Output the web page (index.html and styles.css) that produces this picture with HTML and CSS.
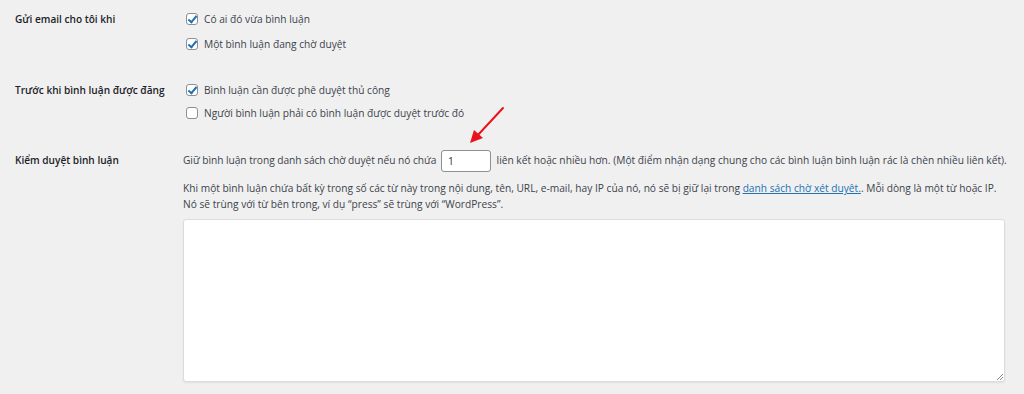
FILE: index.html
```html
<!DOCTYPE html>
<html lang="vi">
<head>
<meta charset="utf-8">
<link rel="stylesheet" href="styles.css">
</head>
<body>
<div class="page">
  <div class="row row-email">
    <div class="label">Gửi email cho tôi khi</div>
    <div class="field">
      <label class="check"><span class="box checked"></span>Có ai đó vừa bình luận</label>
      <label class="check second"><span class="box checked"></span>Một bình luận đang chờ duyệt</label>
    </div>
  </div>
  <div class="row row-before">
    <div class="label">Trước khi bình luận được đăng</div>
    <div class="field">
      <label class="check"><span class="box checked"></span>Bình luận cần được phê duyệt thủ công</label>
      <label class="check second tight"><span class="box"></span>Người bình luận phải có bình luận được duyệt trước đó</label>
    </div>
  </div>
  <div class="row row-mod">
    <div class="label label-mod">Kiểm duyệt bình luận</div>
    <div class="field">
      <div class="inline">Giữ bình luận trong danh sách chờ duyệt nếu nó chứa <span class="num">1</span> <span class="rest">liên kết hoặc nhiều hơn. (Một điểm nhận dạng chung cho các bình luận bình luận rác là chèn nhiều liên kết).</span></div>
      <p class="desc">Khi một bình luận chứa bất kỳ trong số các từ này trong nội dung, tên, URL, e-mail, hay IP của nó, nó sẽ bị giữ lại trong <a href="#">danh sách chờ xét duyệt.</a>. Mỗi dòng là một từ hoặc IP.<br>Nó sẽ trùng với từ bên trong, ví dụ “press” sẽ trùng với “WordPress”.</p>
      <div class="textarea"><span class="grip"></span></div>
    </div>
  </div>
  <svg class="arrow" width="40" height="40" viewBox="0 0 40 40">
    <line x1="36" y1="2" x2="10" y2="30" stroke="#e8141a" stroke-width="2" stroke-linecap="round"/>
    <polygon points="3,37 7,24 16,32" fill="#e8141a"/>
  </svg>
</div>
</body>
</html>
```
FILE: styles.css
```css
* { box-sizing: border-box; }
html, body { margin: 0; padding: 0; }
body {
  background: #f0f0f1;
  font-family: "Open Sans", "Noto Sans", sans-serif;
  font-size: 10.2px;
  color: #3c434a;
  width: 1024px;
  height: 394px;
  overflow: hidden;
}
.page {
  position: relative;
  padding: 11px 0 0 15px;
}
.row {
  display: grid;
  grid-template-columns: 168px 1fr;
}
.row-before { margin-top: 30px; }
.row-mod { margin-top: 28px; }
.label {
  color: #1d2327;
  font-weight: 600;
  font-size: 10.1px;
  line-height: 16px;
}
.label-mod { padding-top: 3px; }
.field { line-height: 16px; }
.check {
  display: flex;
  align-items: center;
  gap: 6px;
  padding-left: 3px;
}
.check.second { margin-top: 9px; }
.check.tight { margin-top: 7px; }
.box {
  width: 12px;
  height: 12px;
  border: 1px solid #8c8f94;
  border-radius: 3px;
  background: #fff;
  position: relative;
  flex: none;
}
.box.checked::after {
  content: "";
  position: absolute;
  left: 3px;
  top: 0px;
  width: 3px;
  height: 7px;
  border-right: 2px solid #2271b1;
  border-bottom: 2px solid #2271b1;
  transform: rotate(40deg);
}
.inline {
  white-space: nowrap;
  line-height: 22px;
  letter-spacing: -0.04px;
}
.rest { letter-spacing: 0.01px; }
.num {
  display: inline-block;
  vertical-align: middle;
  width: 50px;
  height: 22px;
  line-height: 20px;
  border: 1px solid #8c8f94;
  border-radius: 3px;
  background: #fff;
  padding-left: 6px;
  color: #2c3338;
  margin: 0 3px 0 2px;
  letter-spacing: 0;
}
.desc {
  margin: 8px 0 0;
  line-height: 16px;
  white-space: nowrap;
  letter-spacing: 0;
}
.desc a { color: #2271b1; }
.textarea {
  margin-top: 7px;
  width: 822px;
  height: 163px;
  background: #fff;
  border: 1px solid #dcdcde;
  border-radius: 3px;
  box-shadow: 0 1px 2px rgba(0,0,0,0.07);
  position: relative;
}
.grip {
  position: absolute;
  right: 1px;
  bottom: 1px;
  width: 6px;
  height: 6px;
  background: linear-gradient(135deg, transparent 45%, #888 46%, #888 55%, transparent 56%, transparent 70%, #888 71%, #888 80%, transparent 81%);
}
.arrow {
  position: absolute;
  left: 467px;
  top: 106px;
}
```
